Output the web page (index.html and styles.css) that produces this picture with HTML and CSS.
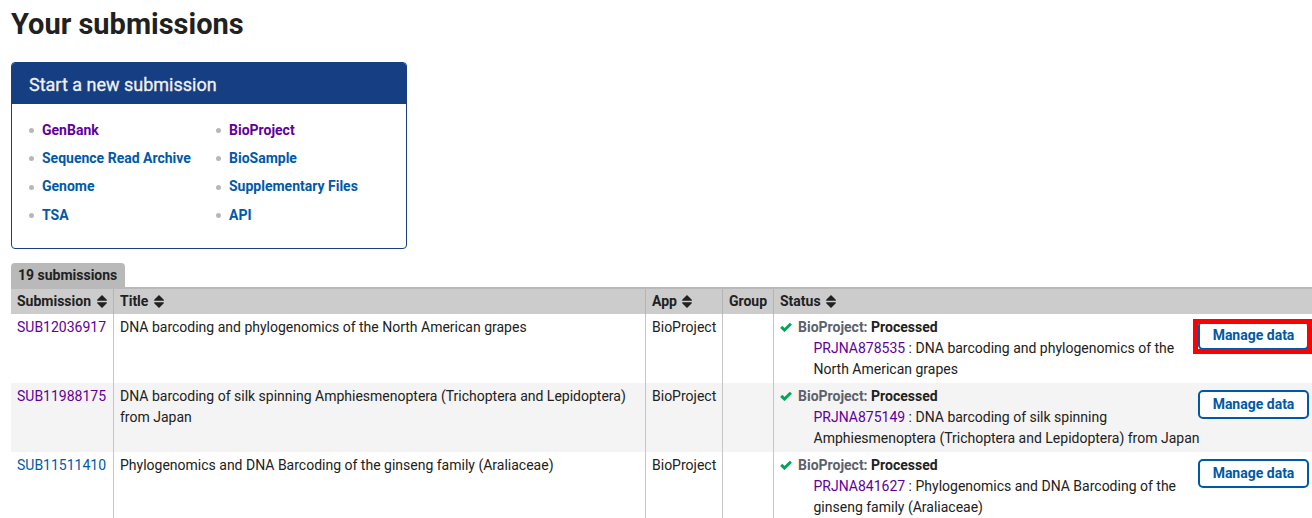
FILE: index.html
```html
<!DOCTYPE html>
<html lang="en">
<head>
<meta charset="utf-8">
<title>Your submissions</title>
<link rel="stylesheet" href="styles.css">
</head>
<body>
<svg width="0" height="0" class="defs">
  <symbol id="sort" viewBox="0 0 10 13"><path d="M5 0 9.800 4.800Q10.200 5.800 9.200 5.800H.8Q-.2 5.800 .2 4.800zM5 13 9.800 8.200Q10.200 7.200 9.200 7.200H.8Q-.2 7.200 .2 8.200z" fill="#212121"/></symbol>
  <symbol id="check" viewBox="0 0 12 10"><path d="M1.200 4.800 4.500 8 10.900 1.700" fill="none" stroke="#00a65a" stroke-width="3"/></symbol>
</svg>
<h1>Your submissions</h1>
<section class="panel">
  <h2>Start a new submission</h2>
  <div class="lists">
    <ul>
      <li><a class="visited">GenBank</a></li>
      <li><a>Sequence Read Archive</a></li>
      <li><a>Genome</a></li>
      <li><a>TSA</a></li>
    </ul>
    <ul>
      <li><a class="visited">BioProject</a></li>
      <li><a>BioSample</a></li>
      <li><a>Supplementary Files</a></li>
      <li><a>API</a></li>
    </ul>
  </div>
</section>
<div class="count">19 submissions</div>
<div class="table">
  <div class="row head">
    <div>Submission<svg class="sort"><use href="#sort"/></svg></div>
    <div>Title<svg class="sort"><use href="#sort"/></svg></div>
    <div>App<svg class="sort"><use href="#sort"/></svg></div>
    <div>Group</div>
    <div>Status<svg class="sort"><use href="#sort"/></svg></div>
  </div>
  <div class="row">
    <div><a class="visited">SUB12036917</a></div>
    <div>DNA barcoding and phylogenomics of the North American grapes</div>
    <div>BioProject</div>
    <div></div>
    <div class="status">
      <div><svg class="check"><use href="#check"/></svg><b class="kind">BioProject:</b> <b>Processed</b>
        <p><a class="visited">PRJNA878535</a> : DNA barcoding and phylogenomics of the<br>North American grapes</p></div>
      <a class="button marked">Manage data</a>
    </div>
  </div>
  <div class="row alt">
    <div><a class="visited">SUB11988175</a></div>
    <div>DNA barcoding of silk spinning Amphiesmenoptera (Trichoptera and Lepidoptera)<br>from Japan</div>
    <div>BioProject</div>
    <div></div>
    <div class="status">
      <div><svg class="check"><use href="#check"/></svg><b class="kind">BioProject:</b> <b>Processed</b>
        <p><a class="visited">PRJNA875149</a> : DNA barcoding of silk spinning<br>Amphiesmenoptera (Trichoptera and Lepidoptera) from Japan</p></div>
      <a class="button">Manage data</a>
    </div>
  </div>
  <div class="row">
    <div><a>SUB11511410</a></div>
    <div>Phylogenomics and DNA Barcoding of the ginseng family (Araliaceae)</div>
    <div>BioProject</div>
    <div></div>
    <div class="status">
      <div><svg class="check"><use href="#check"/></svg><b class="kind">BioProject:</b> <b>Processed</b>
        <p><a class="visited">PRJNA841627</a> : Phylogenomics and DNA Barcoding of the<br>ginseng family (Araliaceae)</p></div>
      <a class="button">Manage data</a>
    </div>
  </div>
</div>
</body>
</html>
```
FILE: styles.css
```css
*, *::before, *::after { box-sizing: border-box; }
html { overflow: hidden; }
body { margin: 0; padding: 6px 0 0 11px; height: 518px; overflow: hidden; background: #fff; color: #212121; font: 14px/21px Roboto, sans-serif; }
.defs { display: block; position: absolute; }
h1 { margin: 0 0 20px; font-size: 29px; line-height: 36px; font-weight: 700; }
a { color: #0059a8; }
a.visited { color: #60009b; }
.panel { width: 396px; height: 187px; border: 1px solid #163e83; border-radius: 4px; overflow: hidden; }
.panel h2 { margin: 0; padding: 2px 0 0 17px; height: 41px; background: #163e83; color: #f1f1f1; font-size: 18px; line-height: 40px; font-weight: 400; -webkit-text-stroke: 0.3px #f1f1f1; }
.lists { display: grid; grid-template-columns: 187px 1fr; padding: 12px 0 0 17px; }
ul { margin: 0; padding: 0; list-style: none; }
li { display: flex; align-items: center; height: 28.3px; font-weight: 700; white-space: nowrap; }
li::before { content: ""; width: 5px; height: 5px; margin: 1px 8px 0 0; border-radius: 50%; background: #b8b8b8; }
.count { width: 114px; height: 24px; margin-top: 14px; padding-left: 7px; border-radius: 4px 4px 0 0; background: #b9b9b9; font-weight: 700; line-height: 25px; white-space: nowrap; }
.table { border-top: 2px solid #b9b9b9; }
.row { display: grid; grid-template-columns: 102px 532px 77px 51px 1fr; height: 69px; white-space: nowrap; }
.row > div { padding: 3px 0 0 6px; border-left: 1px solid #c6c6c6; }
.row > div:first-child { border-left: 0; }
.alt { background: #f4f4f4; }
.head { height: 25px; background: #ccc; font-weight: 700; }
.head > div { padding-top: 2px; border-color: #b4b4b4; }
.sort { width: 10px; height: 13px; margin-left: 5.5px; vertical-align: -2px; }
.status { display: flex; justify-content: space-between; }
.status p { margin: 0 0 0 33.5px; }
.check { width: 12px; height: 10px; margin-right: 6px; }
.kind { color: #5b616b; }
.button { position: relative; flex: none; width: 111px; height: 29px; margin: 4px 3px 0 -10px; border: 2px solid #0059a8; border-radius: 5px; background: #fff; color: #0059a8; font-weight: 700; line-height: 25px; text-align: center; }
.marked::after { content: ""; position: absolute; top: -4px; left: -7px; width: 119px; height: 35px; border: 5px solid #f00; }
```
